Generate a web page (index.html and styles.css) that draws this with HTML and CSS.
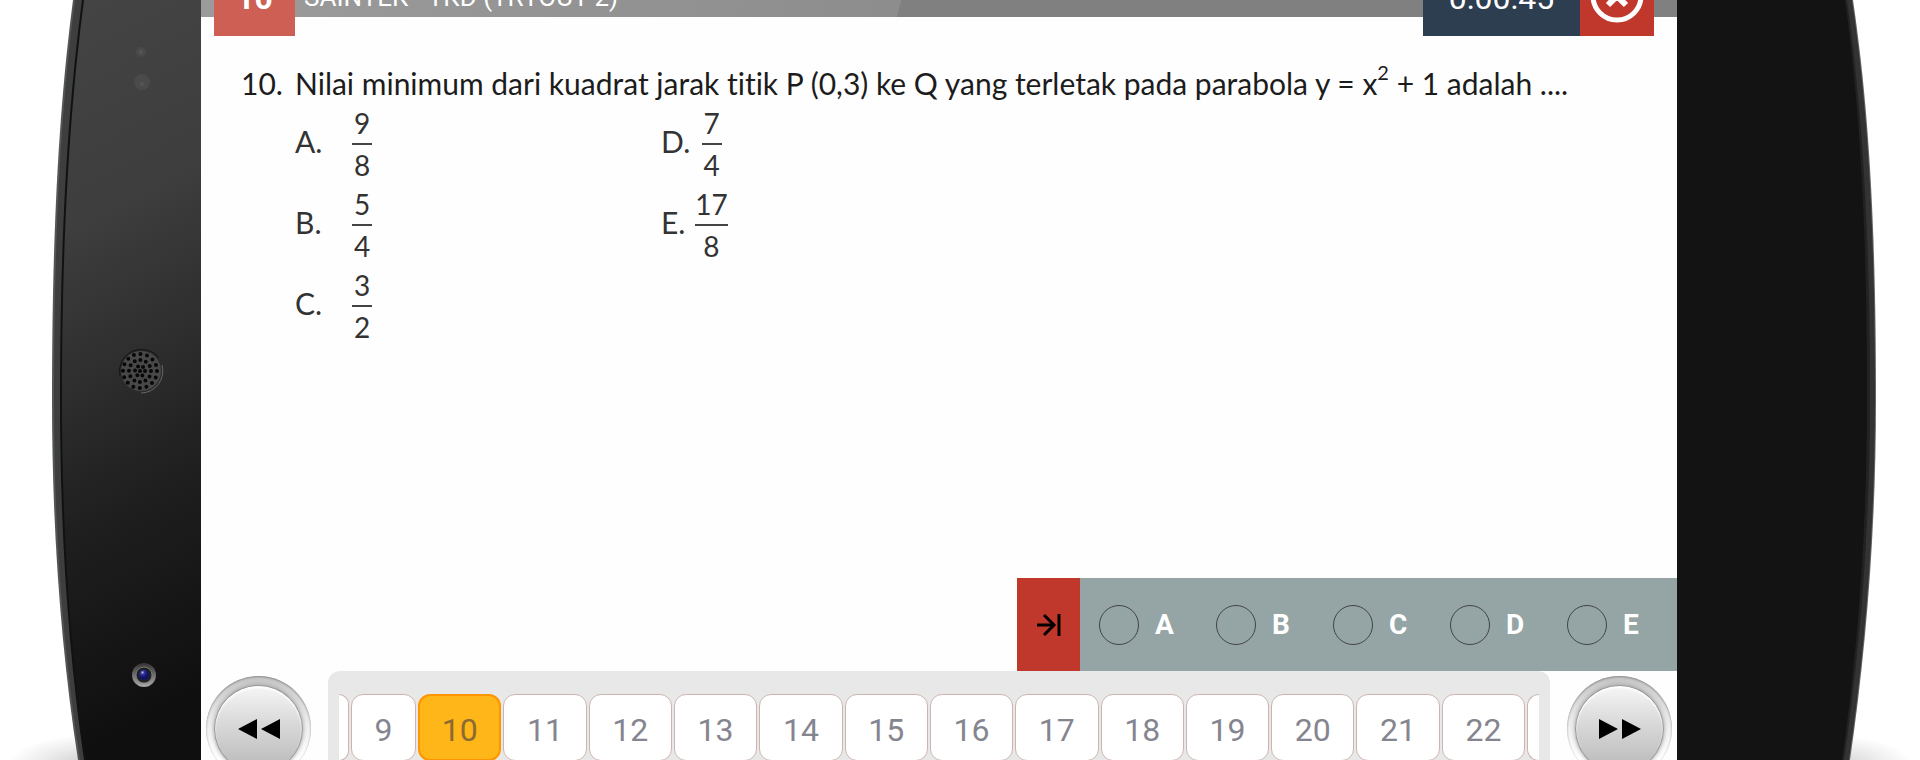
FILE: index.html
```html
<!DOCTYPE html>
<html lang="id">
<head>
<meta charset="utf-8">
<title>SAINTEK - TKD (TRYOUT 2)</title>
<link rel="stylesheet" href="styles.css">
</head>
<body>
<div class="tablet">
  <svg class="bezel bezel-left" viewBox="0 0 201 760" preserveAspectRatio="none" aria-hidden="true">
    <defs>
      <linearGradient id="body-l" x1="0" y1="0" x2="0.1" y2="1">
        <stop offset="0" stop-color="#444"/><stop offset="0.3" stop-color="#3e3e3e"/><stop offset="0.5" stop-color="#2f2f2f"/><stop offset="0.7" stop-color="#1f1f1f"/><stop offset="1" stop-color="#0f0f0f"/>
      </linearGradient>
      <radialGradient id="shade"><stop offset="0" stop-color="#ccc"/><stop offset="0.6" stop-color="#ececec"/><stop offset="1" stop-color="#fff"/></radialGradient>
      <linearGradient id="lens-ring" x1="0" y1="0" x2="0" y2="1"><stop offset="0" stop-color="#333"/><stop offset="1" stop-color="#aaa"/></linearGradient>
      <radialGradient id="lens" cx="0.35" cy="0.25"><stop offset="0" stop-color="#b8c0d0"/><stop offset="0.4" stop-color="#3034a0"/><stop offset="1" stop-color="#101468"/></radialGradient>
    </defs>
    <ellipse cx="90" cy="765" rx="82" ry="30" fill="url(#shade)"/>
    <path d="M73 0C58 115 52 240 52 400C52 530 61 650 78 760H201V0Z" fill="#555"/>
    <path d="M75 0C60 115 54 240 54 400C54 530 63 650 80 760H201V0Z" fill="#3d3e3f"/>
    <path d="M82 0C67 115 60 240 60 400C60 530 68 650 84 760H201V0Z" fill="#111"/>
    <path d="M84 0C69 115 62 240 62 400C62 530 70 650 86 760H201V0Z" fill="url(#body-l)"/>
    <circle cx="141" cy="52" r="5" fill="#4a4a4b"/><circle cx="141" cy="52" r="2" fill="#56565a"/>
    <circle cx="142" cy="82" r="8" fill="#4a4a4b"/><circle cx="142" cy="84" r="2" fill="#555"/>
    <circle cx="141" cy="371" r="22" fill="#2b2b2b"/>
    <path d="M141 393A22 22 0 0 0 162 365" fill="none" stroke="#666" stroke-width="1"/>
    <path d="M120 376A22 22 0 0 1 159 358" fill="none" stroke="#111" stroke-width="1"/>
    <circle cx="141" cy="371" r="20" fill="#484848"/>
    <g fill="none" stroke="#080808" stroke-width="4" stroke-linecap="round">
      <circle cx="140" cy="371" r="17" stroke-dasharray="0 6.675"/>
      <circle cx="140" cy="371" r="11" stroke-dasharray="0 5.76"/>
      <circle cx="140" cy="371" r="5" stroke-dasharray="0 5.236"/>
      <path d="M140 371H140"/>
    </g>
    <circle cx="144" cy="675" r="12" fill="url(#lens-ring)"/>
    <circle cx="144" cy="675" r="8" fill="#202022" stroke="#777" stroke-width="1"/>
    <circle cx="144" cy="675" r="5" fill="url(#lens)"/>
  </svg>

  <main class="screen">
    <header class="topbar">
      <span class="badge">10</span>
      <h1 class="title">SAINTEK - TKD (TRYOUT 2)</h1>
      <time class="timer">0:00:45</time>
      <button class="close" type="button" aria-label="Tutup">
        <svg width="54" height="54" viewBox="0 0 54 54"><circle cx="27" cy="27" r="24" fill="none" stroke="#fff" stroke-width="5"/><path d="M18 18L36 36M36 18L18 36" stroke="#fff" stroke-width="6"/></svg>
      </button>
    </header>

    <section class="question">
      <p class="stem"><span class="number">10.</span><span>Nilai minimum dari kuadrat jarak titik P (0,3) ke Q yang terletak pada parabola y = x<sup>2</sup> + 1 adalah ....</span></p>
      <div class="options">
        <div class="option"><span class="letter">A.</span><span class="fraction"><span>9</span><span class="den">8</span></span></div>
        <div class="option"><span class="letter">B.</span><span class="fraction"><span>5</span><span class="den">4</span></span></div>
        <div class="option"><span class="letter">C.</span><span class="fraction"><span>3</span><span class="den">2</span></span></div>
        <div class="option near"><span class="letter">D.</span><span class="fraction"><span>7</span><span class="den">4</span></span></div>
        <div class="option near"><span class="letter">E.</span><span class="fraction"><span>17</span><span class="den">8</span></span></div>
      </div>
    </section>

    <form class="answers">
      <button class="collapse" type="button" aria-label="Sembunyikan">
        <svg width="24" height="22" viewBox="0 0 24 22" fill="none" stroke="#000"><path d="M0 11H16" stroke-width="3"/><path d="M7 1L17 11L7 21" stroke-width="3"/><path d="M22 0V22" stroke-width="3"/></svg>
      </button>
      <div class="choices">
        <label class="choice"><input type="radio" name="answer">A</label>
        <label class="choice"><input type="radio" name="answer">B</label>
        <label class="choice"><input type="radio" name="answer">C</label>
        <label class="choice"><input type="radio" name="answer">D</label>
        <label class="choice"><input type="radio" name="answer">E</label>
      </div>
    </form>

    <nav class="pager">
      <button class="round" type="button" aria-label="Sebelumnya"><span class="dome"><svg width="42" height="20" viewBox="0 0 42 20"><path d="M0 10L19 0V20ZM23 10L42 0V20Z"/></svg></span></button>
      <div class="strip">
        <div class="track">
          <button class="cell cut-left" type="button" aria-label="Soal 8"></button>
          <button class="cell narrow" type="button">9</button>
          <button class="cell active" type="button">10</button>
          <button class="cell" type="button">11</button>
          <button class="cell" type="button">12</button>
          <button class="cell" type="button">13</button>
          <button class="cell" type="button">14</button>
          <button class="cell" type="button">15</button>
          <button class="cell" type="button">16</button>
          <button class="cell" type="button">17</button>
          <button class="cell" type="button">18</button>
          <button class="cell" type="button">19</button>
          <button class="cell" type="button">20</button>
          <button class="cell" type="button">21</button>
          <button class="cell" type="button">22</button>
          <button class="cell cut-right" type="button" aria-label="Soal 23"></button>
        </div>
      </div>
      <button class="round" type="button" aria-label="Berikutnya"><span class="dome"><svg width="42" height="20" viewBox="0 0 42 20"><path d="M0 0L19 10L0 20ZM23 0L42 10L23 20Z"/></svg></span></button>
    </nav>
  </main>

  <svg class="bezel bezel-right" viewBox="0 0 243 760" preserveAspectRatio="none" aria-hidden="true">
    <ellipse cx="150" cy="765" rx="86" ry="30" fill="url(#shade)"/>
    <path d="M176 0C193 115 199 240 199 400C199 530 189 650 173 760H0V0Z" fill="#666"/>
    <path d="M175 0C192 115 198 240 198 400C198 530 188 650 172 760H0V0Z" fill="#333"/>
    <path d="M170 0C186 115 193 240 193 400C193 530 183 650 167 760H0V0Z" fill="#222"/>
    <path d="M168 0C184 115 190 240 190 400C190 530 181 650 165 760H0V0Z" fill="#131313"/>
  </svg>
</div>
</body>
</html>
```
FILE: styles.css
```css
* { box-sizing: border-box; }

body {
  margin: 0;
  background: #fff;
  font-family: Roboto, sans-serif;
  overflow: hidden;
}

button {
  border: 0;
  padding: 0;
  font: inherit;
  cursor: pointer;
}

.tablet {
  display: flex;
  height: 100vh;
  overflow: hidden;
}

.bezel { height: 100%; flex: none; }
.bezel-left { width: 201px; }
.bezel-right { width: 243px; }

.screen {
  flex: 1;
  min-width: 0;
  display: flex;
  flex-direction: column;
  background: #fefefe;
}

/* Top bar: the grey band ends above the coloured blocks */
.topbar {
  display: flex;
  height: 56px;
  margin-top: -20px;
  padding: 0 23px 0 13px;
  color: #fff;
  line-height: 36px;
  background:
    linear-gradient(105deg, #9b9b9b, #8d8d8d 47.5%, #808080 47.5%) no-repeat 0 0 / 100% 37px;
}

.badge {
  width: 81px;
  text-align: center;
  font-size: 32px;
  font-weight: 700;
  background: #cd5f54;
}

.title {
  flex: 1;
  margin: 0;
  padding-left: 9px;
  font-size: 26px;
  font-weight: 400;
  line-height: 34px;
}

.timer {
  width: 157px;
  text-align: center;
  font-size: 32px;
  background: #2d3e50;
}

.close {
  display: flex;
  justify-content: center;
  align-items: flex-start;
  width: 74px;
  background: #c0382b;
}

.close svg { margin-top: -11px; }

/* Question */
.question {
  flex: 1;
  padding: 27px 40px 0;
  font-family: Lato, Carlito, sans-serif;
  font-size: 30px;
  font-variant-ligatures: none;
  color: #1c1c1c;
}

.stem {
  display: flex;
  margin: 0;
  line-height: 40px;
  white-space: nowrap;
}

.number { flex: 0 0 54px; }

.stem sup {
  font-size: 20px;
  line-height: 0;
  vertical-align: 15px;
}

.options {
  display: grid;
  grid-template: repeat(3, 81px) / 366px 366px;
  grid-auto-flow: column;
  padding-left: 54px;
  color: #333;
}

.option {
  display: flex;
  align-items: center;
}

.option.near { width: 67px; }

.letter {
  width: 57px;
  padding-bottom: 6px;
}

.near .letter { width: 34px; }

.fraction {
  display: flex;
  flex-direction: column;
  min-width: 20px;
  font-size: 28px;
  line-height: 40px;
  text-align: center;
}

.near .fraction { margin: 0 auto; }

.den { border-top: 2px solid #444; }

/* Answer picker */
.answers {
  display: flex;
  align-self: flex-end;
  height: 93px;
}

.collapse {
  display: flex;
  align-items: center;
  justify-content: center;
  width: 63px;
  background: #c0382b;
}

.choices {
  display: flex;
  align-items: center;
  gap: 41px;
  padding: 0 34px 0 19px;
  background: #95a5a5;
}

.choice {
  display: flex;
  align-items: center;
  gap: 16px;
  width: 76px;
  font-size: 28px;
  font-weight: 700;
  color: #fff;
}

.choice input {
  appearance: none;
  flex: none;
  width: 40px;
  height: 40px;
  margin: 0;
  border: 1px solid #444;
  border-radius: 50%;
}

/* Question pager */
.pager {
  display: flex;
  align-items: flex-start;
  justify-content: space-between;
  height: 89px;
  padding: 0 5px;
}

.round {
  flex: none;
  width: 105px;
  height: 105px;
  margin-top: 5px;
  padding: 9px 8px;
  border-radius: 50%;
  background: linear-gradient(#c4c4c4, #eee 45%, #fff 80%);
  box-shadow: inset 0 1px 2px #888;
}

.dome {
  display: flex;
  align-items: center;
  justify-content: center;
  height: 88px;
  border: 1px solid #999;
  border-radius: 50%;
  background: linear-gradient(#f6f6f6, #d8d8d8 45%, #b8b8b8);
  box-shadow: inset 0 2px 2px #fff, 0 0 4px #999;
}

.strip {
  flex: 1;
  min-width: 0;
  height: 110px;
  margin: 0 17px;
  padding: 23px 11px 0;
  border-radius: 12px;
  background: #e8e8e8;
}

.track {
  display: flex;
  gap: 2px;
  overflow: hidden;
}

.cell {
  flex: 1 1 80px;
  min-width: 0;
  height: 67px;
  padding-top: 4px;
  border: 1px solid #ccb5ae;
  border-radius: 12px;
  background: #fff;
  font-size: 32px;
  color: #858590;
}

.narrow { flex: 0 0 65px; }

.cut-left {
  flex: 0 0 10px;
  border-left: 0;
  border-radius: 0 12px 12px 0;
}

.cut-right {
  flex: 0 0 12px;
  border-right: 0;
  border-radius: 12px 0 0 12px;
}

.active {
  border: 2px solid #ff9500;
  background: #ffb618;
  color: #8c6a32;
}
```
